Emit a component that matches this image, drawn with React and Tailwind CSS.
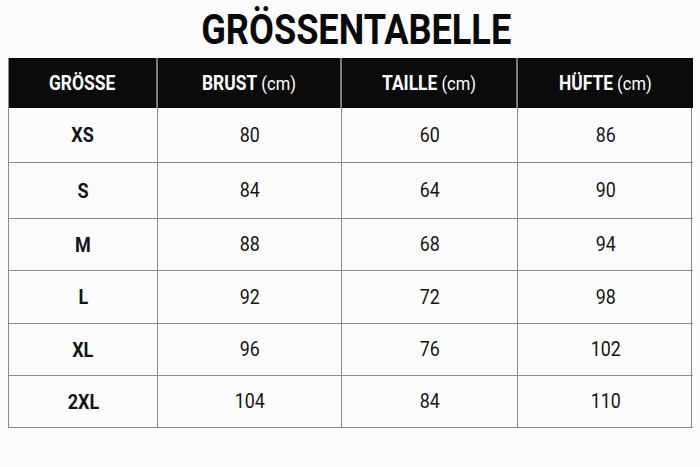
import React from "react";

const rows = [
  { s: "XS", b: "80", t: "60", h: "86", hh: "h-[55px]" },
  { s: "S", b: "84", t: "64", h: "90", hh: "h-[56px]" },
  { s: "M", b: "88", t: "68", h: "94", hh: "h-[52px]" },
  { s: "L", b: "92", t: "72", h: "98", hh: "h-[53px]" },
  { s: "XL", b: "96", t: "76", h: "102", hh: "h-[52px]" },
  { s: "2XL", b: "104", t: "84", h: "110", hh: "h-[52px]" },
];

function Head({ bold, unit, last }) {
  return (
    <div
      className={
        "flex items-center justify-center bg-[#0b0b0b] text-white " +
        (last ? "" : "border-r-2 border-[#7c7c7c]")
      }
    >
      <span className="inline-block scale-x-[0.87] text-[20px] leading-none">
        <span className="font-bold">{bold}</span>
        {unit ? <span className="font-normal text-[19px]"> {unit}</span> : null}
      </span>
    </div>
  );
}

function Cell({ children, bold, last }) {
  return (
    <div
      className={
        "flex items-center justify-center border-b border-[#8a8a8a] " +
        (last ? "" : "border-r border-[#8a8a8a]")
      }
    >
      <span
        className={
          "inline-block leading-none text-[#141414] " +
          (bold
            ? "font-bold text-[20px] scale-x-[0.9]"
            : "font-normal text-[21px] scale-x-[0.85]")
        }
      >
        {children}
      </span>
    </div>
  );
}

export default function App() {
  return (
    <div
      className="w-[700px] h-[467px] bg-[#fcfcfc] overflow-hidden"
      style={{ fontFamily: "Roboto, 'Liberation Sans', sans-serif" }}
    >
      <div className="h-[58px] flex items-center justify-center pl-[12px]">
        <h1 className="inline-block scale-x-[0.86] text-[42px] font-bold leading-none text-[#0a0a0a] mt-[2px]">
          GRÖSSENTABELLE
        </h1>
      </div>
      <div className="ml-[8px] w-[684px] border-l border-r border-[#8a8a8a]">
        <div className="grid grid-cols-[149px_184px_176px_175px] h-[50px]">
          <Head bold="GRÖSSE" />
          <Head bold="BRUST" unit="(cm)" />
          <Head bold="TAILLE" unit="(cm)" />
          <Head bold="HÜFTE" unit="(cm)" last />
        </div>
        {rows.map((r) => (
          <div
            key={r.s}
            className={"grid grid-cols-[149px_184px_176px_175px] " + r.hh}
          >
            <Cell bold>{r.s}</Cell>
            <Cell>{r.b}</Cell>
            <Cell>{r.t}</Cell>
            <Cell last>{r.h}</Cell>
          </div>
        ))}
      </div>
    </div>
  );
}
